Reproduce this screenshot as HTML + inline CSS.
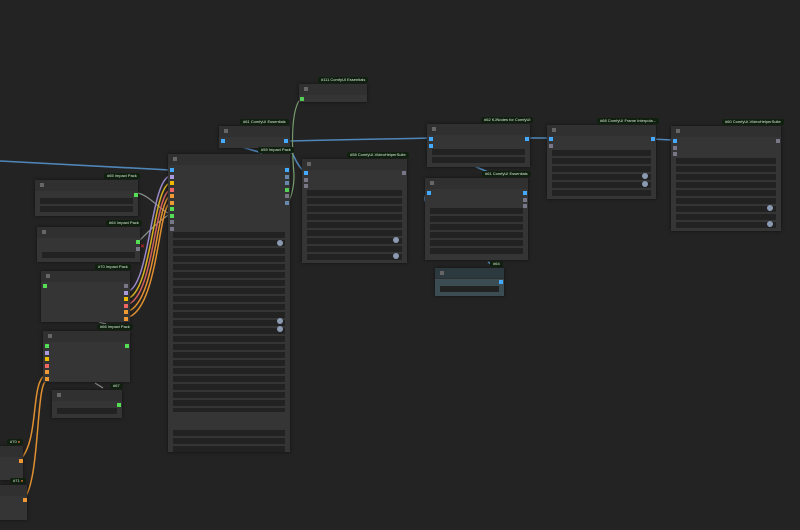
<!DOCTYPE html>
<html><head><meta charset="utf-8"><style>
body{margin:0;width:800px;height:530px;background:#232323;overflow:hidden;position:relative;font-family:"Liberation Sans",sans-serif}
.n{position:absolute;background:#353535;box-shadow:0 0 3px #111}
.n::before{content:"";position:absolute;left:0;right:0;top:0;height:11px;background:#303030}
.ic{position:absolute;left:5px;top:3px;width:4px;height:4px;background:#666}
.w{position:absolute;background:repeating-linear-gradient(#222 0 6px,transparent 6px 8px)}
.b{position:absolute;background:#10200f;color:#d8e8d8;font-size:4px;line-height:6px;padding:0 3px;border-radius:2px;white-space:nowrap}
.d{position:absolute;width:4px;height:4px}
.k{position:absolute;width:6px;height:6px;border-radius:50%;background:#8a9ab0}
</style></head><body>
<svg width="800" height="530" style="position:absolute;left:0;top:0" fill="none">
<g stroke="#4f86b8" stroke-width="1.6">
<path d="M0 161 L170 170"/>
<path d="M290 141 C360 139 400 139 428 138"/>
<path d="M222 141 L262 153"/>
<path d="M287 141 C295 160 300 170 306 172"/>
<path d="M528 138 L548 138"/>
<path d="M652 139 L672 140"/>
<path d="M474 166 L488 172"/>
<path d="M428 193 C424 196 424 200 426 202"/>
<path d="M488 262 L494 266"/>
</g>
<g stroke="#7aa070" stroke-width="1.2"><path d="M301 98 C290 110 292 150 294 175 C294 190 290 200 288 202"/></g>
<g stroke="#8a8f8a" stroke-width="1.2"><path d="M138 193 C150 196 160 210 170 214"/><path d="M140 240 C150 230 160 220 170 214"/><path d="M95 383 L103 388"/><path d="M99 322 L106 324"/></g>
<g stroke-width="1.5">
<path d="M126 292 C150 290 150 180 170 176" stroke="#9a88c8"/>
<path d="M126 299 C152 296 152 188 170 183" stroke="#d6b020"/>
<path d="M126 305 C154 300 154 196 170 190" stroke="#d06060"/>
<path d="M126 312 C156 306 156 202 170 196" stroke="#e09030"/>
<path d="M126 318 C158 312 158 208 170 203" stroke="#e09030"/>
<path d="M20 460 C40 440 30 380 46 375" stroke="#e09030"/>
<path d="M24 499 C40 480 36 385 46 381" stroke="#e09030"/>
</g>
</svg>

<div class="n" style="left:299px;top:84px;width:68px;height:18px"><i class="ic"></i></div>
<div class="b" style="left:318px;top:77px">#111 ComfyUI Essentials</div>
<i class="d" style="left:300px;top:97px;background:#5c5"></i>
<div class="n" style="left:219px;top:126px;width:71px;height:22px"><i class="ic"></i></div>
<div class="b" style="left:240px;top:119px">#61 ComfyUI Essentials</div>
<i class="d" style="left:221px;top:139px;background:#4af"></i><i class="d" style="left:284px;top:139px;background:#4af"></i>
<div class="n" style="left:168px;top:154px;width:122px;height:298px"><i class="ic"></i>
<div class="w" style="left:5px;right:5px;top:78px;height:180px"></div>
<div class="w" style="left:5px;right:5px;top:276px;height:22px"></div></div>
<div class="b" style="left:258px;top:147px">#59 Impact Pack</div>
<i class="d" style="left:170px;top:168px;background:#4af"></i><i class="d" style="left:170px;top:175px;background:#a9d"></i><i class="d" style="left:170px;top:181px;background:#eb0"></i><i class="d" style="left:170px;top:188px;background:#e66"></i><i class="d" style="left:170px;top:194px;background:#e93"></i><i class="d" style="left:170px;top:201px;background:#e93"></i><i class="d" style="left:170px;top:207px;background:#5d5"></i><i class="d" style="left:170px;top:214px;background:#5d5"></i><i class="d" style="left:170px;top:220px;background:#778"></i><i class="d" style="left:170px;top:227px;background:#778"></i>
<i class="d" style="left:285px;top:168px;background:#4af"></i><i class="d" style="left:285px;top:175px;background:#68a"></i><i class="d" style="left:285px;top:181px;background:#68a"></i><i class="d" style="left:285px;top:188px;background:#5c5"></i><i class="d" style="left:285px;top:194px;background:#778"></i><i class="d" style="left:285px;top:201px;background:#68a"></i>
<i class="k" style="left:277px;top:240px"></i><i class="k" style="left:277px;top:318px"></i><i class="k" style="left:277px;top:326px"></i>
<div class="n" style="left:302px;top:159px;width:105px;height:104px"><i class="ic"></i>
<div class="w" style="left:5px;right:5px;top:31px;height:72px"></div></div>
<div class="b" style="left:347px;top:152px">#58 ComfyUI-VideoHelperSuite</div>
<i class="d" style="left:304px;top:171px;background:#4af"></i><i class="d" style="left:304px;top:178px;background:#778"></i><i class="d" style="left:304px;top:184px;background:#778"></i><i class="d" style="left:402px;top:171px;background:#778"></i>
<i class="k" style="left:393px;top:237px"></i><i class="k" style="left:393px;top:253px"></i>
<div class="n" style="left:427px;top:124px;width:103px;height:43px"><i class="ic"></i>
<div class="w" style="left:5px;right:5px;top:25px;height:14px"></div></div>
<div class="b" style="left:481px;top:117px">#62 KJNodes for ComfyUI</div>
<i class="d" style="left:429px;top:137px;background:#4af"></i><i class="d" style="left:429px;top:144px;background:#4af"></i><i class="d" style="left:525px;top:137px;background:#4af"></i>
<div class="n" style="left:425px;top:178px;width:103px;height:82px"><i class="ic"></i>
<div class="w" style="left:5px;right:5px;top:30px;height:48px"></div></div>
<div class="b" style="left:482px;top:171px">#61 ComfyUI Essentials</div>
<i class="d" style="left:427px;top:191px;background:#4af"></i><i class="d" style="left:523px;top:191px;background:#4af"></i><i class="d" style="left:523px;top:198px;background:#778"></i><i class="d" style="left:523px;top:204px;background:#778"></i>
<div class="n" style="left:435px;top:268px;width:69px;height:28px;background:#3c4c53"><i class="ic" style="z-index:1"></i><div style="position:absolute;left:0;right:0;top:0;height:10px;background:#2c393e"></div>
<div style="position:absolute;left:5px;right:5px;top:18px;height:6px;background:#222"></div></div>
<div class="b" style="left:490px;top:261px">#64</div>
<i class="d" style="left:499px;top:280px;background:#4af"></i>
<div class="n" style="left:547px;top:125px;width:109px;height:74px"><i class="ic"></i>
<div class="w" style="left:5px;right:5px;top:25px;height:48px"></div></div>
<div class="b" style="left:597px;top:118px">#68 ComfyUI Frame Interpola...</div>
<i class="d" style="left:549px;top:137px;background:#4af"></i><i class="d" style="left:549px;top:144px;background:#778"></i><i class="d" style="left:651px;top:137px;background:#4af"></i>
<i class="k" style="left:642px;top:173px"></i><i class="k" style="left:642px;top:181px"></i>
<div class="n" style="left:671px;top:126px;width:110px;height:105px"><i class="ic"></i>
<div class="w" style="left:5px;right:5px;top:32px;height:72px"></div></div>
<div class="b" style="left:722px;top:119px">#60 ComfyUI-VideoHelperSuite</div>
<i class="d" style="left:673px;top:139px;background:#4af"></i><i class="d" style="left:673px;top:146px;background:#778"></i><i class="d" style="left:673px;top:152px;background:#778"></i><i class="d" style="left:776px;top:139px;background:#778"></i>
<i class="k" style="left:767px;top:205px"></i><i class="k" style="left:767px;top:221px"></i>
<div class="n" style="left:35px;top:180px;width:103px;height:36px"><i class="ic"></i>
<div class="w" style="left:5px;right:5px;top:18px;height:16px"></div></div>
<div class="b" style="left:104px;top:173px">#65 Impact Pack</div>
<i class="d" style="left:134px;top:193px;background:#5d5"></i>
<div class="n" style="left:37px;top:227px;width:103px;height:35px"><i class="ic"></i>
<div class="w" style="left:5px;right:5px;top:25px;height:6px"></div></div>
<div class="b" style="left:106px;top:220px">#64 Impact Pack</div>
<i class="d" style="left:136px;top:240px;background:#5d5"></i><i class="d" style="left:136px;top:247px;background:#778"></i><span style="position:absolute;left:140px;top:243px;color:#e22;font-size:6px">✕</span>
<div class="n" style="left:41px;top:271px;width:89px;height:51px"><i class="ic"></i></div>
<div class="b" style="left:95px;top:264px">#70 Impact Pack</div>
<i class="d" style="left:43px;top:284px;background:#5d5"></i>
<i class="d" style="left:124px;top:284px;background:#778"></i><i class="d" style="left:124px;top:291px;background:#a9d"></i><i class="d" style="left:124px;top:297px;background:#eb0"></i><i class="d" style="left:124px;top:304px;background:#e66"></i><i class="d" style="left:124px;top:310px;background:#e93"></i><i class="d" style="left:124px;top:317px;background:#e93"></i>
<div class="n" style="left:43px;top:331px;width:87px;height:51px"><i class="ic"></i></div>
<div class="b" style="left:97px;top:324px">#66 Impact Pack</div>
<i class="d" style="left:45px;top:344px;background:#5d5"></i><i class="d" style="left:45px;top:351px;background:#a9d"></i><i class="d" style="left:45px;top:357px;background:#eb0"></i><i class="d" style="left:45px;top:364px;background:#e66"></i><i class="d" style="left:45px;top:370px;background:#e93"></i><i class="d" style="left:45px;top:377px;background:#e93"></i><i class="d" style="left:125px;top:344px;background:#5d5"></i>
<div class="n" style="left:52px;top:390px;width:70px;height:28px"><i class="ic"></i>
<div class="w" style="left:5px;right:5px;top:18px;height:6px"></div></div>
<div class="b" style="left:110px;top:383px">#67</div>
<i class="d" style="left:117px;top:403px;background:#5d5"></i>
<div class="n" style="left:0px;top:446px;width:23px;height:34px"></div>
<div class="b" style="left:7px;top:439px">#70 <span style="color:#e73">●</span></div>
<i class="d" style="left:19px;top:459px;background:#e93"></i>
<div class="n" style="left:0px;top:485px;width:27px;height:35px"></div>
<div class="b" style="left:10px;top:478px">#71 <span style="color:#e73">●</span></div>
<i class="d" style="left:23px;top:498px;background:#e93"></i>
</body></html>
